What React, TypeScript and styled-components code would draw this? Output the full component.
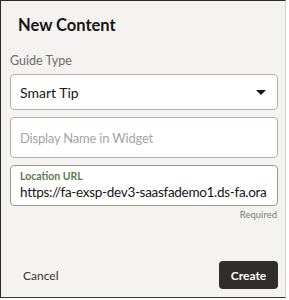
import React from 'react';
import styled, { createGlobalStyle } from 'styled-components';

const GlobalStyle = createGlobalStyle`
  html, body {
    margin: 0;
    padding: 0;
    background: #ffffff;
  }
  * {
    box-sizing: border-box;
  }
`;

const Dialog = styled.div`
  width: 286px;
  height: 298px;
  background: #f4f3f1;
  border-left: 1px solid #2a2826;
  border-top: 1px solid #2a2826;
  border-bottom: 1px solid #3a3836;
  border-right: 1px solid #d6d4d1;
  font-family: Lato, 'Open Sans', sans-serif;
  color: #161513;
  display: flex;
  flex-direction: column;
`;

const Header = styled.h1`
  margin: 0;
  padding: 13px 0 0 17px;
  font-size: 16.5px;
  font-weight: 700;
  line-height: 22px;
`;

const Body = styled.div`
  padding: 17px 7px 0 9px;
  display: flex;
  flex-direction: column;
`;

const FieldLabel = styled.div`
  font-size: 12.5px;
  color: #6f6b67;
  line-height: 16px;
  margin-bottom: 5px;
`;

const Box = styled.div<{ $tall?: boolean; $active?: boolean }>`
  height: ${(p) => (p.$tall ? 41 : 36)}px;
  background: #ffffff;
  border: 1px solid ${(p) => (p.$active ? '#8ea47f' : '#b5b1ad')};
  border-radius: 4px;
  display: flex;
  align-items: center;
  padding: 0 10px 0 9px;
  overflow: hidden;
`;

const Stack = styled.div`
  display: flex;
  flex-direction: column;
  gap: 7px;
`;

const Value = styled.span`
  font-size: 14px;
  color: #161513;
  flex: 1;
  white-space: nowrap;
`;

const Placeholder = styled.span`
  font-size: 13px;
  letter-spacing: -0.2px;
  color: #a8a49f;
`;

const Caret = styled.div`
  width: 0;
  height: 0;
  border-left: 5px solid transparent;
  border-right: 5px solid transparent;
  border-top: 5px solid #161513;
  margin-right: 1px;
`;

const FloatBox = styled(Box)`
  flex-direction: column;
  align-items: stretch;
  justify-content: flex-start;
  padding: 4px 6px 0 9px;
`;

const FloatLabel = styled.span`
  font-size: 10.5px;
  color: #5c7a4c;
  font-weight: 700;
  line-height: 13px;
`;

const UrlValue = styled.span`
  font-size: 13.5px;
  letter-spacing: -0.3px;
  line-height: 19px;
  color: #161513;
  white-space: nowrap;
  overflow: hidden;
`;

const Helper = styled.div`
  text-align: right;
  font-size: 9.5px;
  color: #807b76;
  margin-top: 3px;
  padding-right: 1px;
`;

const Footer = styled.div`
  margin-top: auto;
  padding: 0 7px 8px 22px;
  display: flex;
  align-items: center;
  justify-content: space-between;
`;

const TextButton = styled.button`
  background: none;
  border: none;
  padding: 0;
  font-family: inherit;
  font-size: 12px;
  color: #3a3631;
`;

const PrimaryButton = styled.button`
  background: #312d2a;
  color: #ffffff;
  border: none;
  border-radius: 4px;
  width: 59px;
  height: 28px;
  font-family: inherit;
  font-size: 12px;
  font-weight: 700;
`;

export default function App() {
  return (
    <>
      <GlobalStyle />
      <Dialog>
        <Header>New Content</Header>
        <Body>
          <FieldLabel>Guide Type</FieldLabel>
          <Stack>
            <Box>
              <Value>Smart Tip</Value>
              <Caret />
            </Box>
            <Box $tall>
              <Placeholder>Display Name in Widget</Placeholder>
            </Box>
            <FloatBox $tall $active>
              <FloatLabel>Location URL</FloatLabel>
              <UrlValue>https://fa-exsp-dev3-saasfademo1.ds-fa.ora</UrlValue>
            </FloatBox>
          </Stack>
          <Helper>Required</Helper>
        </Body>
        <Footer>
          <TextButton>Cancel</TextButton>
          <PrimaryButton>Create</PrimaryButton>
        </Footer>
      </Dialog>
    </>
  );
}
